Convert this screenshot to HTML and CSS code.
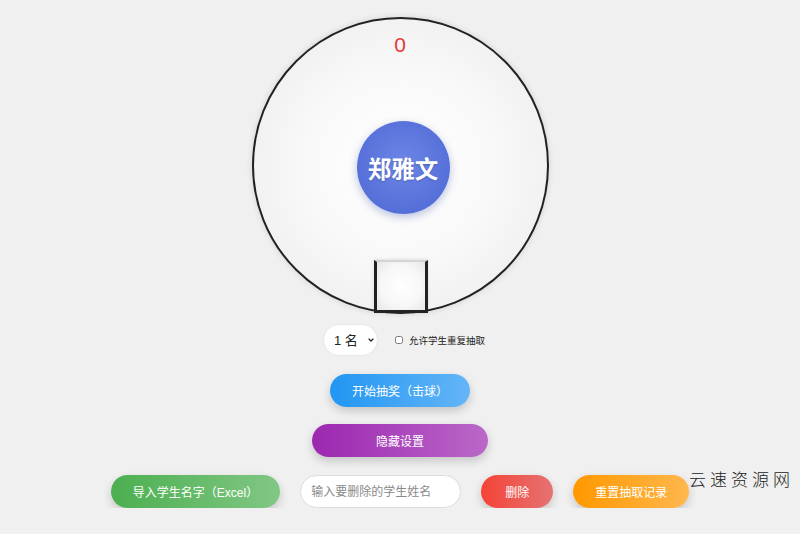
FILE: index.html
```html
<!DOCTYPE html>
<html lang="zh-CN">
<head>
<meta charset="utf-8">
<title>抽奖</title>
<link rel="stylesheet" href="styles.css">
</head>
<body>
<div class="page">
  <div class="machine">
    <div class="counter">0</div>
    <div class="ball">郑雅文</div>
    <div class="outlet"></div>
  </div>
  <div class="controls">
    <div class="select-wrap">
      <select class="count">
        <option>1 名</option>
        <option>2 名</option>
        <option>3 名</option>
      </select>
      <svg class="chev" width="6" height="4" viewBox="0 0 6 4"><path d="M0.6 0.6 L3 3 L5.4 0.6" fill="none" stroke="#222" stroke-width="1.3"/></svg>
    </div>
    <label class="repeat"><input type="checkbox" class="check"> 允许学生重复抽取</label>
  </div>
  <button class="btn btn-blue">开始抽奖（击球）</button>
  <button class="btn btn-purple">隐藏设置</button>
  <div class="bottom-row">
    <button class="btn btn-green">导入学生名字（Excel）</button>
    <input class="name-input" type="text" placeholder="输入要删除的学生姓名">
    <button class="btn btn-red">删除</button>
    <button class="btn btn-orange">重置抽取记录</button>
  </div>
</div>
<div class="watermark">云速资源网</div>
</body>
</html>
```

FILE: styles.css
```css
html, body {
  margin: 0;
  padding: 0;
  background: #f0f0f0;
  font-family: "Liberation Sans", "Noto Sans CJK SC", sans-serif;
}

.page {
  display: flex;
  flex-direction: column;
  align-items: center;
  padding-top: 17px;
}

.machine {
  position: relative;
  width: 293px;
  height: 293px;
  border: 2.5px solid #222;
  border-radius: 50%;
  background: radial-gradient(circle at 50% 50%, #ffffff 0%, #f9f9f9 45%, #e9e9e9 100%);
  box-shadow: 0 0 6px rgba(0, 0, 0, 0.12);
}

.counter {
  position: absolute;
  top: 14px;
  left: 0;
  right: 0;
  text-align: center;
  color: #e53935;
  font-size: 21px;
  line-height: 24px;
}

.ball {
  position: absolute;
  left: 103px;
  top: 102px;
  width: 93px;
  height: 93px;
  border-radius: 50%;
  background: radial-gradient(circle at 50% 45%, #6c86e6 0%, #5a74dc 55%, #4d67d3 100%);
  box-shadow: 0 3px 8px rgba(60, 80, 170, 0.35);
  color: #fff;
  font-family: "Noto Sans CJK SC", sans-serif;
  font-weight: 700;
  font-size: 23.5px;
  display: flex;
  align-items: center;
  justify-content: center;
  text-shadow: 0 1px 2px rgba(0, 0, 0, 0.2);
}

.outlet {
  position: absolute;
  left: 120px;
  bottom: -1px;
  width: 48px;
  height: 48px;
  border: 3px solid #222;
  border-top: 2px solid #d4d4d4;
  background: radial-gradient(circle at 50% 50%, #ffffff 0%, #f7f7f7 60%, #e6e6e6 100%);
  box-shadow: 0 -1px 3px rgba(0, 0, 0, 0.1);
}

.controls {
  display: flex;
  align-items: center;
  margin-top: 10px;
  gap: 17px;
  margin-left: 8px;
}

.select-wrap {
  position: relative;
  display: flex;
}

.count {
  appearance: none;
  -webkit-appearance: none;
  width: 55px;
  height: 32px;
  border: 1px solid #e8e8e8;
  border-radius: 16px;
  background: #fff;
  font-family: "Liberation Sans", "Noto Sans CJK SC", sans-serif;
  font-size: 13px;
  color: #222;
  padding: 0 0 0 10px;
  outline: none;
}

.chev {
  position: absolute;
  left: 45px;
  top: 14px;
  pointer-events: none;
}

.repeat {
  display: flex;
  align-items: center;
  gap: 6px;
  font-size: 9.5px;
  color: #222;
  font-family: "Noto Sans CJK SC", sans-serif;
}

.check {
  width: 8px;
  height: 8px;
  margin: 0;
}

.btn {
  height: 33px;
  border: none;
  border-radius: 17px;
  padding: 0 22px;
  color: #fff;
  font-family: "Liberation Sans", "Noto Sans CJK SC", sans-serif;
  font-size: 12px;
  box-shadow: 0 4px 10px rgba(0, 0, 0, 0.18);
  cursor: pointer;
}

.btn-blue {
  margin-top: 18px;
  background: linear-gradient(90deg, #2196f3, #64b5f6);
}

.btn-purple {
  margin-top: 17px;
  padding: 0 64px;
  background: linear-gradient(90deg, #9c27b0, #ba68c8);
}

.bottom-row {
  display: flex;
  align-items: center;
  gap: 20px;
  margin-top: 18px;
}

.btn-green {
  background: linear-gradient(90deg, #4caf50, #81c784);
}

.btn-red {
  padding: 0 24px;
  background: linear-gradient(90deg, #f44336, #e57373);
}

.btn-orange {
  padding: 0 22px;
  background: linear-gradient(90deg, #ff9800, #ffb74d);
}

.name-input {
  width: 161px;
  height: 33px;
  box-sizing: border-box;
  border: 1px solid #dcdcdc;
  border-radius: 17px;
  background: #fff;
  padding: 0 10px;
  font-family: "Liberation Sans", "Noto Sans CJK SC", sans-serif;
  font-size: 12px;
  outline: none;
}

.name-input::placeholder {
  color: #8a8a8a;
}

.watermark {
  position: absolute;
  left: 689px;
  top: 466px;
  font-family: "Noto Sans CJK SC", serif;
  font-weight: 300;
  font-size: 17px;
  letter-spacing: 4px;
  color: #222;
}
```
